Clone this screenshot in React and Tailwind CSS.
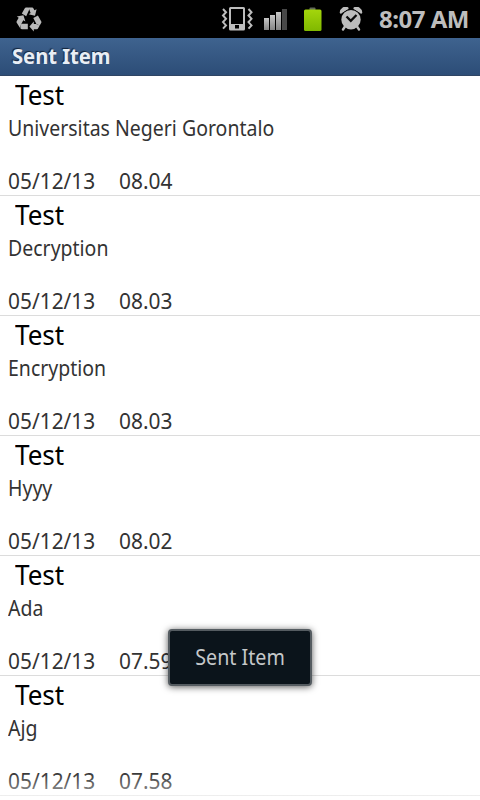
import React from "react";

const items = [
  { body: "Universitas Negeri Gorontalo", time: "08.04" },
  { body: "Decryption", time: "08.03" },
  { body: "Encryption", time: "08.03" },
  { body: "Hyyy", time: "08.02" },
  { body: "Ada", time: "07.59" },
  { body: "Ajg", time: "07.58" },
];

function RecycleIcon() {
  return (
    <svg className="ml-[16px] h-[25px] w-[26px]" viewBox="0 0 26 25" fill="#b9b9b9">
      <path d="M5.800 6.500L8.800 1.300Q9.200 .6 10 .6H12.600L13.500 2L10.200 9.200Z" />
      <path d="M12.600 .6H16.200Q17 .6 17.500 1.500L18.400 3.200L20.600 2.200L19 8.700L12.600 7.200L14.600 6Z" />
      <path d="M0.800 9.600L7.400 8.200L9.400 14.400L7.300 13.300L5 17.600L4.200 21.300L.6 15.600Q.3 15 .7 14.300L2.700 10.800Z" />
      <path d="M5.200 16.800H11.800V22.200H6Q5 22.200 4.500 21.400Z" />
      <path d="M17.300 11L21.900 8.400L25.300 14.500Q25.600 15.200 25.300 15.800L23.700 18.500L20.400 16.900Z" />
      <path d="M20.200 17L23.700 18.500L22 21.600Q21.700 22.200 21 22.200H17.800V24.500L13.400 19.500L17.800 14.500V17Z" />
    </svg>
  );
}

function VibrateIcon() {
  return (
    <svg className="h-[24px] w-[32px]" viewBox="0 0 32 24" fill="none" stroke="#bdbdbd">
      <path d="M2 2l3 3.200-3 3.300 3 3.300-3 3.300 3 3.300-3 3.300M27.500 2l3 3.200-3 3.300 3 3.300-3 3.300 3 3.300-3 3.300" strokeWidth="2" />
      <path fill="#bdbdbd" stroke="none" fillRule="evenodd" d="M9.500 0h13a1.500 1.500 0 0 1 1.500 1.500v20.500a1.500 1.500 0 0 1-1.500 1.500h-13a1.500 1.500 0 0 1-1.500-1.500V1.500A1.500 1.500 0 0 1 9.500 0zM10 2v15h12v-15zM14 18v3.500h4v-3.500z" />
    </svg>
  );
}

function SignalIcon() {
  return (
    <svg className="h-[22px] w-[24px]" viewBox="0 0 24 22">
      <defs>
        <linearGradient id="bar" x1="0" y1="0" x2="0" y2="1">
          <stop offset="0" stopColor="#c6c6c6" />
          <stop offset="1" stopColor="#858585" />
        </linearGradient>
      </defs>
      <rect x="0" y="10" width="5" height="12" fill="url(#bar)" />
      <rect x="6" y="7" width="5" height="15" fill="url(#bar)" />
      <rect x="12" y="4" width="5" height="18" fill="url(#bar)" />
      <rect x="18" y="1" width="5" height="21" fill="#484848" />
    </svg>
  );
}

function BatteryIcon() {
  return (
    <svg className="h-[25px] w-[20px]" viewBox="0 0 20 25">
      <defs>
        <linearGradient id="cell" x1="0" y1="0" x2="0" y2="1">
          <stop offset="0" stopColor="#a4d60c" />
          <stop offset="1" stopColor="#80b800" />
        </linearGradient>
      </defs>
      <rect x="6.500" y="0.500" width="6" height="3" rx="1" fill="#626a58" />
      <rect x="1" y="2.500" width="17.500" height="21.500" rx="1.500" fill="url(#cell)" />
    </svg>
  );
}

function AlarmIcon() {
  return (
    <svg className="h-[24px] w-[24px]" viewBox="0 0 24 24">
      <path d="M1.800 5.500A4.800 4.800 0 0 1 8.500 1.200zM22.200 5.500A4.800 4.800 0 0 0 15.500 1.200z" fill="#bdbdbd" stroke="#bdbdbd" strokeWidth="2.200" strokeLinejoin="round" />
      <circle cx="12" cy="12.700" r="10.500" fill="#000" />
      <path d="M6 19.500l-2 3M18 19.500l2 3" stroke="#bdbdbd" strokeWidth="2.400" strokeLinecap="round" />
      <circle cx="12" cy="12.700" r="9.700" fill="#bdbdbd" />
      <path d="M7.500 9.500l4.300 4.300 5.700-5.800" fill="none" stroke="#0a0a0a" strokeWidth="2.300" />
    </svg>
  );
}

export default function App() {
  return (
    <div className="relative h-[800px] w-[480px] overflow-hidden bg-white font-['Noto_Sans',sans-serif]">
      <div className="flex h-[38px] items-center bg-black">
        <RecycleIcon />
        <div className="ml-auto flex items-center pr-[11px]">
          <VibrateIcon />
          <div className="ml-[11px]"><SignalIcon /></div>
          <div className="ml-[15px]"><BatteryIcon /></div>
          <div className="ml-[16px]"><AlarmIcon /></div>
          <span className="ml-[16px] w-[90px] whitespace-nowrap text-[24px] leading-[38px] font-bold tracking-[-0.5px] text-[#bdbdbd]">
            8:07 AM
          </span>
        </div>
      </div>
      <div className="h-[38px] border-b border-[#2f4564] bg-linear-to-b from-[#3f638f] to-[#2c4d77] pl-[12px] text-[21px] leading-[37px] font-bold text-[#e9eef5] [text-shadow:-1px_-1px_1px_#14243a]">
        <span className="inline-block origin-left scale-x-[0.96]">Sent Item</span>
      </div>
      <div className="h-[724px] overflow-hidden">
        {items.map((item) => (
          <div key={item.body} className="flex h-[120px] flex-col items-start border-b border-[#dcdcdc] pl-[8px] text-[22px] text-[#333]">
            <div className="ml-[7px] h-[38px] origin-left scale-x-[0.965] text-[27px] leading-[38px] text-black">Test</div>
            <div className="-mt-px h-[28px] origin-left scale-x-[0.886] whitespace-nowrap leading-[28px]">{item.body}</div>
            <div className="mt-[25px] flex h-[28px] leading-[28px]">
              <span className="w-[111px]">
                <span className="inline-block origin-left scale-x-[0.95]">05/12/13</span>
              </span>
              <span className="inline-block origin-left scale-x-[0.95]">{item.time}</span>
            </div>
          </div>
        ))}
      </div>
      <div className="absolute inset-x-0 bottom-0 h-[28px] bg-linear-to-b from-white/0 to-white/60" />
      <div className="absolute top-[629px] left-[168px] flex h-[57px] w-[144px] items-center justify-center rounded-[4px] border-2 border-[#555c61] bg-[#0b141b] pb-[2px] text-[22px] text-[#c5c8ca] shadow-[0_1px_7px_rgba(0,0,0,0.65)]">
        <span className="inline-block scale-x-[0.895] whitespace-nowrap">Sent Item</span>
      </div>
    </div>
  );
}
